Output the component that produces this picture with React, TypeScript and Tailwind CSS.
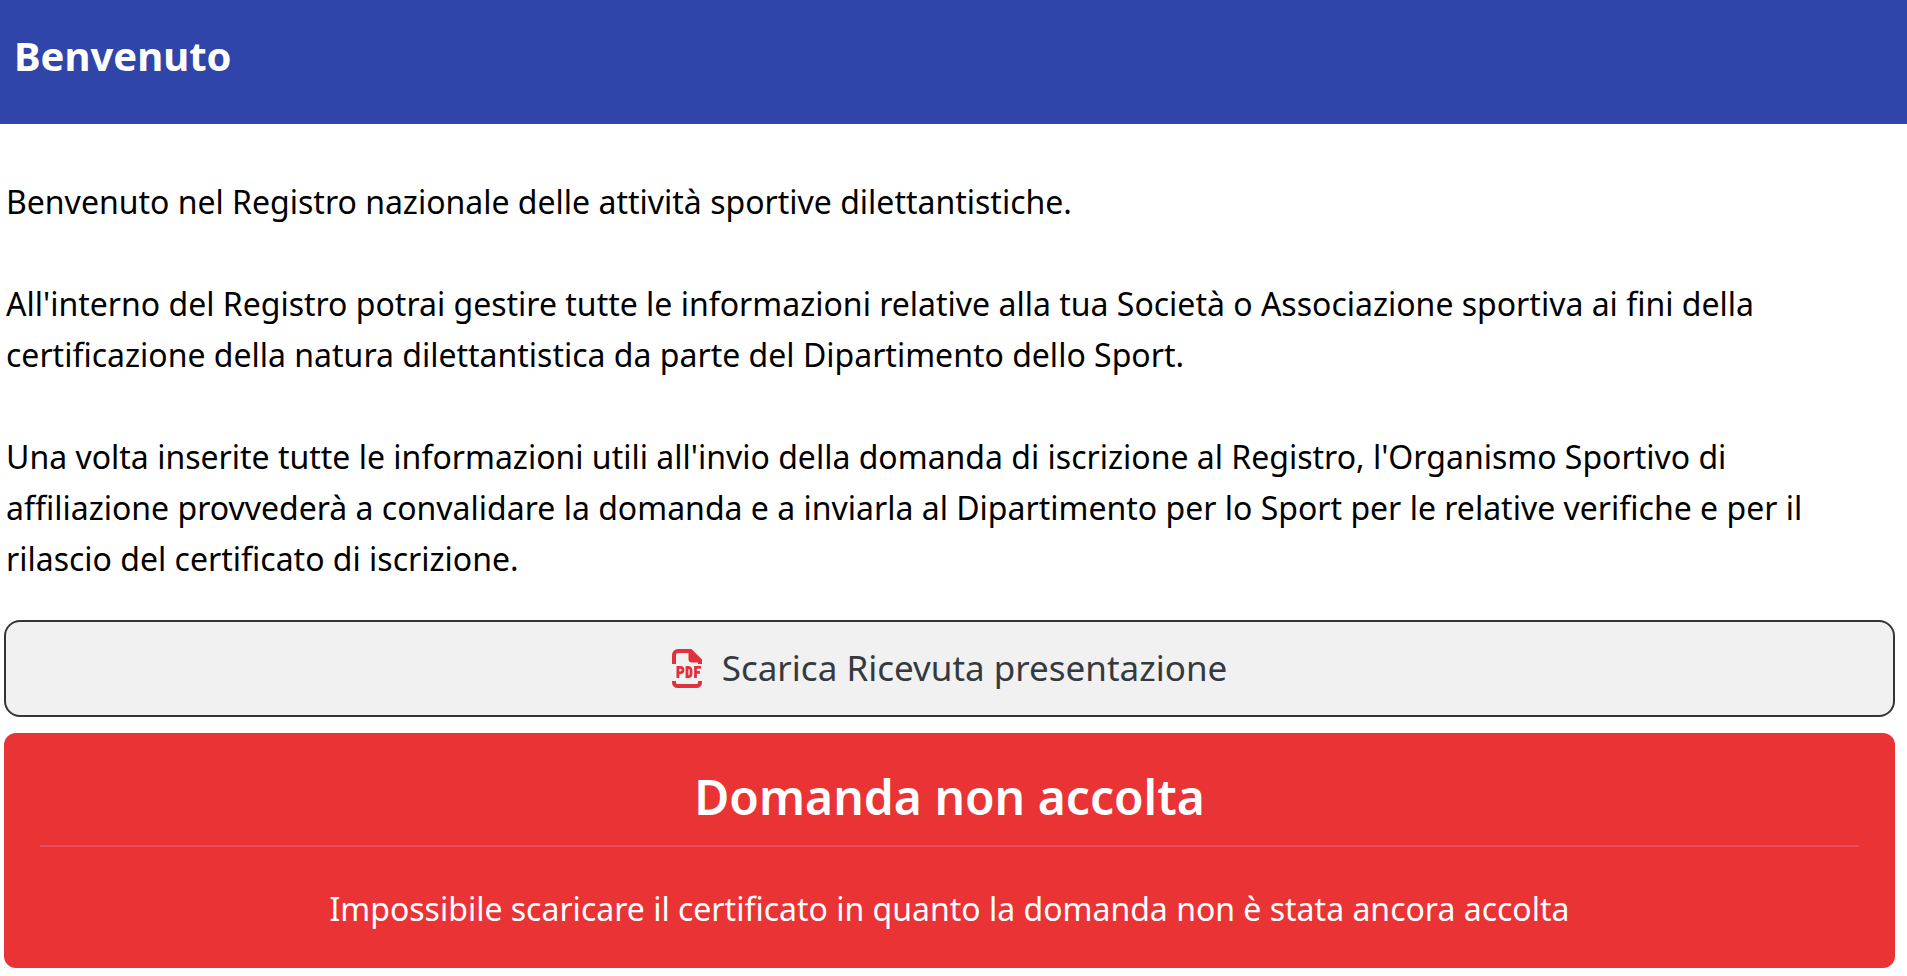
const paragraphs = [
  "Benvenuto nel Registro nazionale delle attività sportive dilettantistiche.",
  "All'interno del Registro potrai gestire tutte le informazioni relative alla tua Società o Associazione sportiva ai fini della certificazione della natura dilettantistica da parte del Dipartimento dello Sport.",
  "Una volta inserite tutte le informazioni utili all'invio della domanda di iscrizione al Registro, l'Organismo Sportivo di affiliazione provvederà a convalidare la domanda e a inviarla al Dipartimento per lo Sport per le relative verifiche e per il rilascio del certificato di iscrizione.",
];

function PdfIcon() {
  return (
    <svg viewBox="0 0 30 40" className="h-10 w-[30px] shrink-0" fill="none" stroke="#df323e" aria-hidden="true">
      <path d="M2 15V6a4 4 0 0 1 4-4H19" strokeWidth="4" />
      <path d="M16.500 0H19.500L30 10.500V15H26V13.500H20a3.500 3.500 0 0 1-3.500-3.500z" fill="#df323e" stroke="none" />
      <path d="M2 32v1.500A3.500 3.500 0 0 0 5.500 37h19a3.500 3.500 0 0 0 3.500-3.500V32" strokeWidth="4" />
      <path d="M5.900 29V18.400h2.400a2.700 2.700 0 0 1 0 5.400H5.900M15 18.400v9.200h1.400a2.600 2.600 0 0 0 2.600-2.600v-4a2.600 2.600 0 0 0-2.600-2.600zM23.500 29V18.400H29M23.500 23.300H28" strokeWidth="2.800" />
    </svg>
  );
}

export default function App() {
  return (
    <div className="bg-white font-['Noto_Sans','Open_Sans',sans-serif]">
      <header className="bg-[#2f45aa] px-3.5 pt-[34px] pb-[46px]">
        <h1 className="text-[40px] leading-[44px] font-bold text-white">Benvenuto</h1>
      </header>
      <main className="px-1 pt-[52px]">
        <div className="flex flex-col gap-[51px] pr-20 pl-0.5 text-[32px] leading-[51px] text-black">
          {paragraphs.map(text => <p key={text}>{text}</p>)}
        </div>
        <div className="mt-9 mr-2 flex flex-col gap-4">
          <button type="button" className="flex h-[97px] items-center justify-center gap-5 rounded-2xl border-2 border-[#333637] bg-[#f1f1f1] text-[35px] text-[#343a40]">
            <PdfIcon />
            Scarica Ricevuta presentazione
          </button>
          <section className="rounded-xl bg-[#ea3335] px-9 pt-8 pb-[34px] text-center text-white">
            <h2 className="border-b-2 border-[#ed4b5c] pb-4 text-5xl leading-[64px] font-semibold">Domanda non accolta</h2>
            <p className="pt-9 text-[32px] leading-[51px]">Impossibile scaricare il certificato in quanto la domanda non è stata ancora accolta</p>
          </section>
        </div>
      </main>
    </div>
  );
}
